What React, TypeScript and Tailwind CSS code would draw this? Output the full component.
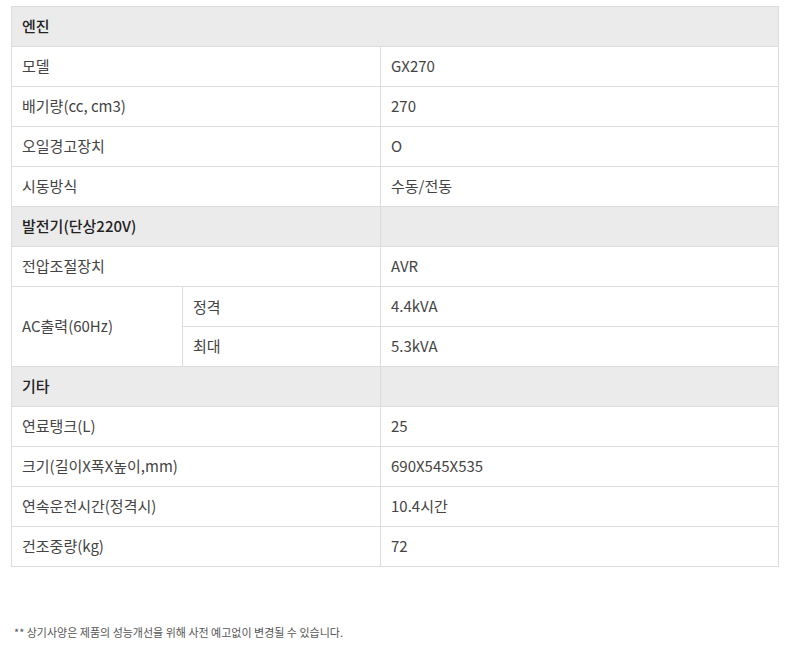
export default function App() {
  const f = { fontFamily: '"Noto Sans CJK KR", "Noto Sans", sans-serif' };
  const td = "border border-[#dcdcdc] pl-[10px] h-[40px] align-middle";
  const H = ({ t, first }: { t: string; first?: boolean }) => (
    <tr className="bg-[#ebebeb]">
      {first ? (
        <td colSpan={3} className={td + " font-medium text-[#222]"}>{t}</td>
      ) : (
        <>
          <td colSpan={2} className={td + " font-medium text-[#222]"}>{t}</td>
          <td className={td}></td>
        </>
      )}
    </tr>
  );
  const R = ({ a, b }: { a: string; b: string }) => (
    <tr>
      <td colSpan={2} className={td}>{a}</td>
      <td className={td}>{b}</td>
    </tr>
  );
  return (
    <div className="bg-white w-[791px] h-[671px] text-[#444] text-[15px]" style={f}>
      <div className="pt-[6px] pl-[11px]">
        <table className="w-[767px] border-collapse border border-[#c8c8c8] table-fixed">
          <colgroup>
            <col className="w-[171px]" />
            <col className="w-[198px]" />
            <col className="w-[398px]" />
          </colgroup>
          <tbody>
            <H t="엔진" first />
            <R a="모델" b="GX270" />
            <R a="배기량(cc, cm3)" b="270" />
            <R a="오일경고장치" b="O" />
            <R a="시동방식" b="수동/전동" />
            <H t="발전기(단상220V)" />
            <R a="전압조절장치" b="AVR" />
            <tr>
              <td rowSpan={2} className={td}>AC출력(60Hz)</td>
              <td className={td + " align-top pt-[9px]"}>정격</td>
              <td className={td}>4.4kVA</td>
            </tr>
            <tr>
              <td className={td + " align-top pt-[8px]"}>최대</td>
              <td className={td}>5.3kVA</td>
            </tr>
            <H t="기타" />
            <R a="연료탱크(L)" b="25" />
            <R a="크기(길이X폭X높이,mm)" b="690X545X535" />
            <R a="연속운전시간(정격시)" b="10.4시간" />
            <R a="건조중량(kg)" b="72" />
          </tbody>
        </table>
      </div>
      <div className="mt-[57px] pl-[14px] text-[11px] text-[#555]">** 상기사양은 제품의 성능개선을 위해 사전 예고없이 변경될 수 있습니다.</div>
    </div>
  );
}
